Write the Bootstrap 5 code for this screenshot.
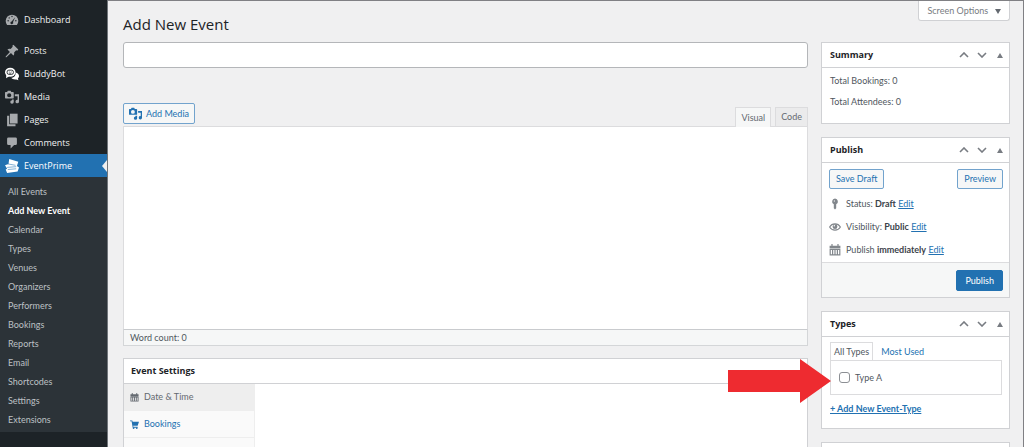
<!DOCTYPE html>
<html lang="en">
<head>
<meta charset="utf-8">
<meta name="viewport" content="width=device-width, initial-scale=1">
<title>Add New Event</title>
<link href="https://cdn.jsdelivr.net/npm/bootstrap@5.3.0/dist/css/bootstrap.min.css" rel="stylesheet">
<style>
:root{--line:#d0d1d4;--blue:#2271b1}
body{font-family:Lato,"Open Sans",sans-serif;font-size:9px;line-height:12px;color:#50575e;background:#f0f0f1}
a{color:var(--blue)}
.sidebar{width:108px;background:#1d2327;border-right:1px solid #70757a;padding-top:8px}
.menu-link{height:23px;padding-left:5px;gap:5px;font-family:"Open Sans",sans-serif;font-size:9px;color:#f0f0f1;text-decoration:none;position:relative}
.menu-link svg{width:14px;height:14px;color:#a7aaad;flex:none}
.menu-link.current{background:var(--blue);color:#fff}
.menu-link.current svg{color:#fff}
.menu-link.current::after{content:"";position:absolute;right:0;top:6px;border:6px solid transparent;border-left:0;border-right:5px solid #f0f0f1}
.submenu{background:#2c3338;padding:5px 0 3px}
.submenu a{display:block;height:19px;line-height:19px;padding-left:8px;color:#bcc0c4;text-decoration:none}
.submenu a.current{color:#fff;font-weight:700}
.content-area{border-top:1px solid #808084;border-right:1px solid #808084;padding:0 13px 0 15px}
.screen-options{height:20px;width:92px;border:1px solid var(--line);border-top:0;border-radius:0 0 3px 3px;background:#fff;color:#787c82;font-size:9px;padding:0}
h1{font-family:"Open Sans",sans-serif;font-size:15px;line-height:20px;font-weight:400;color:#1d2327;margin:0;padding-top:13px}
.title-row{height:41px}
.columns{gap:13px}
.side-col{width:189px;gap:13px}
.title-input{height:26px;border:1px solid #b4b6b9;border-radius:3px;padding:0 6px;font-size:12px;margin-bottom:35px}
.btn-wp{--bs-btn-padding-x:6px;--bs-btn-padding-y:0px;--bs-btn-font-size:9px;--bs-btn-line-height:18px;--bs-btn-border-radius:2px;--bs-btn-color:#2271b1;--bs-btn-bg:#f6f7f7;--bs-btn-border-color:#72a3cd;--bs-btn-hover-color:#0a4b78;--bs-btn-hover-bg:#f0f0f1;--bs-btn-hover-border-color:#0a4b78}
.btn-publish{--bs-btn-color:#fff;--bs-btn-bg:#2271b1;--bs-btn-border-color:#2271b1;--bs-btn-padding-x:8px;--bs-btn-line-height:19px}
.media-btn{--bs-btn-padding-x:5px;--bs-btn-line-height:19px;margin-bottom:2px}
.media-btn svg{width:13px;height:13px}
.ed-tab{height:19px;border:1px solid #dcdcde;border-bottom:0;background:#ebebec;color:#646970;padding:0 5px;font-size:9px}
.ed-tab.active{background:#f6f7f7;height:20px;margin-bottom:-1px;position:relative}
.ed-area{height:204px;border:1px solid #dcdcde;border-bottom-color:#c9cbce;border-radius:0;resize:none;padding:8px;font-size:10px}
.ed-status{height:16px;line-height:15px;border:1px solid #d4d6d8;border-top:0;background:#f6f7f7;padding-left:6px;margin-bottom:12px}
.postbox{background:#fff;border:1px solid var(--line)}
.box-head{height:25px;border-bottom:1px solid var(--line);padding-left:8px}
.box-head.main-head{padding-left:7px}
.box-head h2{font-family:"Open Sans",sans-serif;font-size:9px;line-height:14px;font-weight:700;color:#1d2327;margin:0}
.box-head button{border:0;background:none;padding:0;width:18px;height:18px;color:#787c82;display:flex;align-items:center;justify-content:center}
.set-tabs{width:131px;background:#fafafa;border-right:1px solid #eee}
.set-tabs a{height:27px;padding-left:6px;gap:5px;border-bottom:1px solid #eee;text-decoration:none;font-size:9px}
.set-tabs a.active{background:#eee;color:#646970}
.set-tabs svg{width:9px;height:9px}
.set-body{min-height:110px}
.summary-body{padding:6px 8px;height:55px;line-height:13px}
.pub-actions{padding:6px 6px 0 7px}
.pub-rows{padding:3px 7px 1px}
.pub-rows>div{height:23px;gap:5px}
.pub-rows svg{width:12px;height:12px;color:#82878c;flex:none}
.pub-rows b{font-weight:700;color:#3c434a}
.pub-foot{height:35px;background:#f6f7f7;border-top:1px solid #dcdcde;padding:0 6px}
.types-body{padding:5px 7px 14px 8px;height:91px}
.type-tab{border:1px solid transparent;border-bottom:0;background:none;height:18px;padding:0 3px;font-size:9px;color:var(--blue)}
.type-tab.active{background:#fff;border-color:#dcdcde;color:#50575e;height:19px;margin-bottom:-1px;position:relative}
.type-panel{border:1px solid #dcdcde;height:35px;padding-left:8px;gap:5px;position:relative}
.type-panel .form-check-input{width:11px;height:11px;border-color:#8c8f94;border-radius:3px;margin:0}
.pointer-arrow{position:absolute;right:100%;top:-2px;width:103px;height:44px;pointer-events:none}
.add-type{font-weight:700;margin-top:8px}
</style>
</head>
<body>
<div class="d-flex vh-100 overflow-hidden">
<svg width="0" height="0" class="position-absolute" aria-hidden="true">
<symbol id="media" viewBox="0 0 20 20"><path fill="currentColor" fill-rule="evenodd" d="M1 3h2l1-2h4l1 2h2.500a1 1 0 0 1 1 1v7a1 1 0 0 1-1 1H1a1 1 0 0 1-1-1V4a1 1 0 0 1 1-1zm5 1.500a3 3 0 1 0 0 6 3 3 0 0 0 0-6zM14 6h6v10.500a2.500 2.500 0 1 1-2-2.400V9h-4zM10 13.500h2.500V17A2.500 2.500 0 1 1 10 14.600z"/></symbol>
<symbol id="up" viewBox="0 0 10 6"><path d="M1 5l4-4 4 4" fill="none" stroke="currentColor" stroke-width="1.600"/></symbol>
<symbol id="down" viewBox="0 0 10 6"><path d="M1 1l4 4 4-4" fill="none" stroke="currentColor" stroke-width="1.600"/></symbol>
<symbol id="tri" viewBox="0 0 6 5"><path d="M3 0l3 5H0z" fill="currentColor"/></symbol>
<symbol id="cal" viewBox="0 0 20 20"><path fill="currentColor" fill-rule="evenodd" d="M1 3h3V0h2v3h8V0h2v3h3v4H1zM1 8h18v11H1zm2 2v7h2v-7zm4 0v7h2v-7zm4 0v7h2v-7zm4 0v7h2v-7z"/></symbol>
</svg>
<nav class="sidebar flex-shrink-0" aria-label="Admin menu">
<a href="#" class="menu-link d-flex align-items-center mb-2"><svg viewBox="0 0 20 20"><path fill="currentColor" d="M3 17a9 9 0 1 1 14 0z"/><g fill="#1d2327"><circle cx="4.500" cy="11" r="1"/><circle cx="6" cy="7" r="1"/><circle cx="10" cy="5" r="1"/><circle cx="15.500" cy="11" r="1"/><path d="M14.500 6l-3 7a2 2 0 1 1-2-1z"/></g></svg>Dashboard</a>
<a href="#" class="menu-link d-flex align-items-center"><svg viewBox="0 0 20 20"><path fill="currentColor" d="M12 1l7 7-1.500 1.500-1.500-.5-3 3c.5 2 0 3.500-1 4.500l-3.500-3.500L2 19H1v-1l6-6.500L3.500 8c1-1 2.500-1.500 4.500-1l3-3-.5-1.500z"/></svg>Posts</a>
<a href="#" class="menu-link d-flex align-items-center"><svg viewBox="0 0 20 20"><path fill="#fff" d="M15 8c3 .5 5 2.500 5 5 0 1.500-.6 2.500-1.600 3.500l.8 2.500-3-1.200c-3 .6-6-.3-7.200-2.300 4 0 6.500-3 6-7.500z"/><ellipse cx="7.500" cy="7.500" rx="7.500" ry="6.500" fill="#fff"/><path fill="#fff" d="M2 11l-.5 5 5-3z"/><rect x="3" y="4.500" width="9" height="6" rx="2.500" fill="none" stroke="#1d2327" stroke-width="1.300"/><path d="M5.500 7h1m2 0h1M6 8.800h3" stroke="#1d2327"/></svg>BuddyBot</a>
<a href="#" class="menu-link d-flex align-items-center"><svg><use href="#media"/></svg>Media</a>
<a href="#" class="menu-link d-flex align-items-center"><svg viewBox="0 0 20 20"><path fill="currentColor" d="M7 1h11v14H7z"/><path fill="currentColor" d="M3 4h3v12h9v3H3z"/></svg>Pages</a>
<a href="#" class="menu-link d-flex align-items-center"><svg viewBox="0 0 20 20"><path fill="currentColor" d="M5 2h10a2 2 0 0 1 2 2v7a2 2 0 0 1-2 2h-2l-5 5v-5H5a2 2 0 0 1-2-2V4a2 2 0 0 1 2-2z"/></svg>Comments</a>
<a href="#" class="menu-link current d-flex align-items-center"><svg viewBox="0 0 20 20"><path fill="currentColor" d="M6 0l13 4-2 6 3 2-2 6-15 2-2-5 2-1-3-5 5-2z"/><path d="M4 7l11 2M3 12l13-1M4 15l12-1" stroke="#2271b1" stroke-width=".8"/></svg>EventPrime</a>
<div class="submenu">
<a href="#">All Events</a><a href="#" class="current">Add New Event</a><a href="#">Calendar</a><a href="#">Types</a><a href="#">Venues</a><a href="#">Organizers</a><a href="#">Performers</a><a href="#">Bookings</a><a href="#">Reports</a><a href="#">Email</a><a href="#">Shortcodes</a><a href="#">Settings</a><a href="#">Extensions</a>
</div>
<a href="#" class="menu-link d-flex align-items-center mt-2" aria-label="Appearance"><svg viewBox="0 0 20 20"><path fill="currentColor" d="M8 6a2 2 0 0 1 4 0v4h5v3H3v-3h5zM4 14h12v5H4z"/></svg></a>
</nav>
<main class="content-area flex-grow-1">
<div class="title-row d-flex justify-content-between align-items-start">
<h1>Add New Event</h1>
<button type="button" class="screen-options">Screen Options <svg class="ms-1" width="6" height="5" viewBox="0 0 6 5"><path d="M0 0h6L3 5z" fill="#646970"/></svg></button>
</div>
<div class="d-flex columns">
<div class="flex-grow-1">
<input type="text" class="title-input d-block w-100 bg-white" aria-label="Add title">
<div class="d-flex justify-content-between">
<button type="button" class="btn btn-wp media-btn d-flex align-items-center gap-1"><svg><use href="#media"/></svg>Add Media</button>
<div class="d-flex align-items-end gap-1"><button type="button" class="ed-tab active">Visual</button><button type="button" class="ed-tab">Code</button></div>
</div>
<textarea class="ed-area d-block w-100" aria-label="Event description"></textarea>
<div class="ed-status">Word count: 0</div>
<section class="postbox">
<div class="box-head main-head d-flex align-items-center"><h2>Event Settings</h2></div>
<div class="d-flex set-body">
<div class="set-tabs">
<a href="#" class="active d-flex align-items-center"><svg><use href="#cal"/></svg>Date &amp; Time</a>
<a href="#" class="d-flex align-items-center"><svg viewBox="0 0 20 20"><path fill="currentColor" d="M0 1h5l1 3h14l-3 9H7l.5 2H17v2H6L3.500 3H0z"/><circle cx="8" cy="18" r="2" fill="currentColor"/><circle cx="15" cy="18" r="2" fill="currentColor"/></svg>Bookings</a>
</div>
</div>
</section>
</div>
<div class="side-col d-flex flex-column flex-shrink-0">
<section class="postbox">
<div class="box-head d-flex align-items-center"><h2 class="me-auto">Summary</h2><button type="button" aria-label="Move up"><svg width="10" height="6"><use href="#up"/></svg></button><button type="button" aria-label="Move down"><svg width="10" height="6"><use href="#down"/></svg></button><button type="button" aria-label="Toggle panel"><svg width="6" height="5"><use href="#tri"/></svg></button></div>
<div class="summary-body"><p class="mb-2">Total Bookings: 0</p><p class="mb-0">Total Attendees: 0</p></div>
</section>
<section class="postbox">
<div class="box-head d-flex align-items-center"><h2 class="me-auto">Publish</h2><button type="button" aria-label="Move up"><svg width="10" height="6"><use href="#up"/></svg></button><button type="button" aria-label="Move down"><svg width="10" height="6"><use href="#down"/></svg></button><button type="button" aria-label="Toggle panel"><svg width="6" height="5"><use href="#tri"/></svg></button></div>
<div class="pub-actions d-flex justify-content-between"><button type="button" class="btn btn-wp">Save Draft</button><button type="button" class="btn btn-wp">Preview</button></div>
<div class="pub-rows">
<div class="d-flex align-items-center"><svg viewBox="0 0 20 20"><path fill="currentColor" fill-rule="evenodd" d="M10 1a5 5 0 0 1 2 9.500V17l-2 2-2-2v-6.500A5 5 0 0 1 10 1zm-2 3v2h2V4z"/></svg><span>Status: <b>Draft</b> <a href="#">Edit</a></span></div>
<div class="d-flex align-items-center"><svg viewBox="0 0 20 20"><path d="M1 10c4-7 14-7 18 0-4 7-14 7-18 0z" fill="none" stroke="currentColor" stroke-width="1.800"/><circle cx="10" cy="9.500" r="4" fill="currentColor"/><circle cx="8.800" cy="8" r="1.300" fill="#fff"/></svg><span>Visibility: <b>Public</b> <a href="#">Edit</a></span></div>
<div class="d-flex align-items-center"><svg><use href="#cal"/></svg><span>Publish <b>immediately</b> <a href="#">Edit</a></span></div>
</div>
<div class="pub-foot d-flex align-items-center justify-content-end"><button type="button" class="btn btn-wp btn-publish">Publish</button></div>
</section>
<section class="postbox">
<div class="box-head d-flex align-items-center"><h2 class="me-auto">Types</h2><button type="button" aria-label="Move up"><svg width="10" height="6"><use href="#up"/></svg></button><button type="button" aria-label="Move down"><svg width="10" height="6"><use href="#down"/></svg></button><button type="button" aria-label="Toggle panel"><svg width="6" height="5"><use href="#tri"/></svg></button></div>
<div class="types-body">
<div class="d-flex align-items-end gap-1"><button type="button" class="type-tab active">All Types</button><button type="button" class="type-tab">Most Used</button></div>
<div class="type-panel d-flex align-items-center"><input class="form-check-input" type="checkbox" id="typeA"><label for="typeA">Type A</label>
<svg class="pointer-arrow" viewBox="0 0 103 44"><path fill="#ee2b30" d="M0 11h72V0l31 22-31 22V33H0z"/></svg></div>
<a href="#" class="add-type d-inline-block">+ Add New Event-Type</a>
</div>
</section>
<section class="postbox"><div class="box-head"></div></section>
</div>
</div>
</main>
</div>
</body>
</html>
